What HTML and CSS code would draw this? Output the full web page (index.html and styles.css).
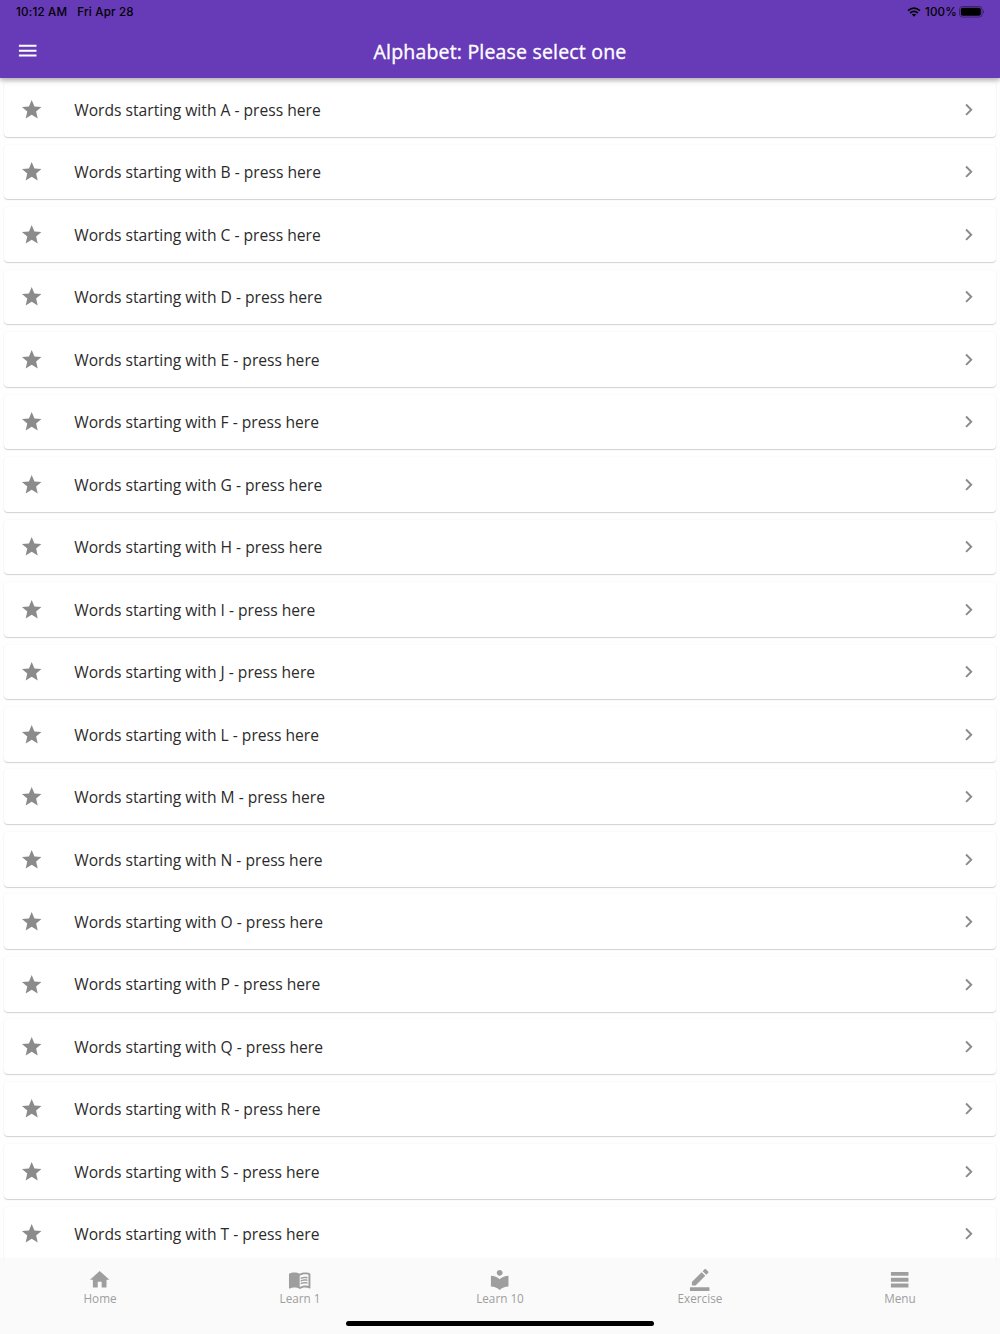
FILE: index.html
```html
<!DOCTYPE html>
<html lang="en">
<head>
    <meta charset="UTF-8">
    <meta name="viewport" content="width=device-width, initial-scale=1.0">
    <title>Alphabet</title>
    <link rel="stylesheet" href="styles.css">
</head>
<body>
    <div class="app">
        <header class="header">
            <div class="status-bar">
                <span class="time">10:12 AM</span>
                <span class="date">Fri Apr 28</span>
                <div class="status-right">
                    <svg class="wifi" viewBox="0 0 14 10">
                        <path d="M1 3.7Q7-1.5 13 3.7M3.1 6Q7 2.7 10.9 6" fill="none" stroke="#000" stroke-width="1.7"/>
                        <path d="M4.8 7.6Q7 5.9 9.2 7.6L7 9.8z"/>
                    </svg>
                    <span class="percent">100%</span>
                    <svg class="battery" viewBox="0 0 26 12">
                        <rect x=".5" y=".5" width="22.6" height="10.6" rx="3" fill="none" stroke="#000" stroke-opacity=".4"/>
                        <rect x="1.8" y="1.8" width="20" height="8" rx="1.8"/>
                        <path d="M24.2 4v3.6q1-.5 1-1.8t-1-1.8z" opacity=".45"/>
                    </svg>
                </div>
            </div>
            <div class="toolbar">
                <button class="menu-button" aria-label="Open menu">
                    <svg class="icon" viewBox="0 0 24 24"><path d="M3 18h18v-2H3v2zm0-5h18v-2H3v2zm0-7v2h18V6H3z"/></svg>
                </button>
                <h1 class="title">Alphabet: Please select one</h1>
            </div>
        </header>

        <main class="list" id="wordList"></main>

        <nav class="bottom-nav">
            <div class="tabs">
                <a class="tab">
                    <svg class="icon" viewBox="0 0 24 24"><path d="M10 20v-6h4v6h5v-8h3L12 3 2 12h3v8z"/></svg>
                    <span>Home</span>
                </a>
                <a class="tab">
                    <svg class="icon" viewBox="0 0 24 24">
                        <path fill-rule="evenodd" d="M21 5c-1.11-.35-2.33-.5-3.5-.5-1.95 0-4.05.4-5.5 1.5-1.45-1.1-3.55-1.5-5.5-1.5S2.45 4.9 1 6v14.65c0 .25.25.5.5.5.1 0 .15-.05.25-.05C3.1 20.45 5.05 20 6.5 20c1.95 0 4.05.4 5.5 1.5 1.35-.85 3.8-1.5 5.5-1.5 1.65 0 3.35.3 4.75 1.05.1.05.15.05.25.05.25 0 .5-.25.5-.5V6c-.6-.45-1.25-.75-2-1zm0 13.5c-1.1-.35-2.3-.5-3.5-.5-1.7 0-4.15.65-5.5 1.5V8c1.35-.85 3.8-1.5 5.5-1.5 1.2 0 2.4.15 3.5.5v11.5z"/>
                        <path d="M17.5 10.5c.88 0 1.73.09 2.5.26V9.24c-.79-.15-1.64-.24-2.5-.24-1.7 0-3.24.29-4.5.83v1.66c1.13-.64 2.7-.99 4.5-.99zM13 12.49v1.66c1.13-.64 2.7-.99 4.5-.99.88 0 1.73.09 2.5.26V11.9c-.79-.15-1.64-.24-2.5-.24-1.7 0-3.24.3-4.5.83zM17.5 14.33c-1.7 0-3.24.29-4.5.83v1.66c1.13-.64 2.7-.99 4.5-.99.88 0 1.73.09 2.5.26v-1.52c-.79-.16-1.64-.24-2.5-.24z"/>
                    </svg>
                    <span>Learn 1</span>
                </a>
                <a class="tab">
                    <svg class="icon" viewBox="0 0 24 24"><path d="M12 11.55C9.64 9.35 6.48 8 3 8v11c3.48 0 6.64 1.35 9 3.55 2.36-2.19 5.52-3.55 9-3.55V8c-3.48 0-6.64 1.35-9 3.55zM12 8c1.66 0 3-1.34 3-3s-1.34-3-3-3-3 1.34-3 3 1.34 3 3 3z"/></svg>
                    <span>Learn 10</span>
                </a>
                <a class="tab">
                    <svg class="icon edit" viewBox="0 0 24 24"><path d="M17.75 7L14 3.25l-10 10V17h3.75l10-10zm2.96-2.96c.39-.39.39-1.02 0-1.41L18.37.29c-.39-.39-1.02-.39-1.41 0L15 2.25 18.75 6l1.96-1.96zM2 18.7h20v4H2z"/></svg>
                    <span>Exercise</span>
                </a>
                <a class="tab">
                    <svg class="icon" viewBox="0 0 24 24"><path d="M3 4h18v4H3zM3 10h18v4H3zM3 16h18v4H3z"/></svg>
                    <span>Menu</span>
                </a>
            </div>
            <div class="home-indicator"></div>
        </nav>
    </div>
    <script src="script.js"></script>
</body>
</html>
```
FILE: styles.css
```css
/* General styling */
* {
    box-sizing: border-box;
}
body {
    margin: 0;
    font-family: "Open Sans", sans-serif;
    background-color: #fefefe;
}
.app {
    height: 1334px;
    display: flex;
    flex-direction: column;
    overflow: hidden;
}
.icon {
    display: block;
    width: 23.4px;
    height: 23.4px;
    fill: currentColor;
    flex: none;
}

/* Header */
.header {
    flex: none;
    height: 78.3px;
    background-color: #673ab7;
    box-shadow: 0 2px 4px rgba(0, 0, 0, 0.22), 0 3px 6px rgba(0, 0, 0, 0.12);
    z-index: 1;
}
.status-bar {
    display: flex;
    align-items: center;
    height: 23.4px;
    padding: 0 15px 0 16px;
    font-family: Inter, sans-serif;
    font-size: 11.6px;
    font-weight: 500;
    letter-spacing: 0.2px;
    color: #000;
}
.date {
    margin-left: 10px;
}
.status-right {
    display: flex;
    align-items: center;
    margin-left: auto;
}
.wifi {
    width: 14px;
    height: 10px;
    margin-right: 4px;
}
.battery {
    width: 26px;
    height: 12px;
    margin-left: 2px;
}
.toolbar {
    display: grid;
    grid-template-columns: 55px 1fr 55px;
    align-items: center;
    height: 55.6px;
}
.menu-button {
    display: flex;
    padding: 0 0 0 15.6px;
    border: none;
    background: none;
    color: white;
}
.title {
    margin: 0;
    text-align: center;
    font-size: 19.53px;
    font-weight: 500;
    letter-spacing: 0.18px;
    line-height: 27px;
    -webkit-text-stroke: 0.35px white;
    color: white;
}

/* Word list */
.list {
    flex: 1;
    min-height: 0;
    display: flex;
    flex-direction: column;
    gap: 7.8px;
    padding: 4px 3.9px 0;
    overflow: hidden;
}
.card {
    flex: none;
    display: flex;
    align-items: center;
    height: 54.68px;
    padding: 0 15.6px 0 16.2px;
    border-radius: 4px;
    background-color: white;
    box-shadow: 0 1px 1px rgba(0, 0, 0, 0.17), 0 0 2px rgba(0, 0, 0, 0.06);
    color: #8b8b8b;
}
.card-text {
    flex: 1;
    margin-left: 30.8px;
    padding-top: 0.6px;
    font-size: 15.63px;
    color: #2b2b2b;
}

/* Bottom navigation */
.bottom-nav {
    flex: none;
    height: 75px;
    background-color: #fafafa;
    box-shadow: 0 -1px 2px rgba(0, 0, 0, 0.02);
    z-index: 1;
}
.tabs {
    display: flex;
    height: 55px;
    padding-top: 9.4px;
}
.tab {
    flex: 1;
    display: flex;
    flex-direction: column;
    align-items: center;
    font-size: 11.72px;
    line-height: 16px;
    color: #9e9e9e;
}
.tab .edit {
    margin-top: 1px;
    margin-bottom: -1px;
}
.tab span {
    margin-top: -1.4px;
}
.home-indicator {
    width: 308px;
    height: 5px;
    margin: 7px auto 0;
    border-radius: 3px;
    background-color: black;
}
```
FILE: script.js
```js
const letters = "ABCDEFGHIJLMNOPQRST";
const wordList = document.getElementById("wordList");

// The list has no words starting with K
for (const letter of letters) {
    const card = document.createElement("div");
    card.className = "card";
    card.innerHTML = `
        <svg class="icon" viewBox="0 0 24 24"><path d="M12 17.27L18.18 21l-1.64-7.03L22 9.24l-7.19-.61L12 2 9.19 8.63 2 9.24l5.46 4.73L5.82 21z"/></svg>
        <span class="card-text">Words starting with ${letter} - press here</span>
        <svg class="icon" viewBox="0 0 24 24"><path d="M10 6L8.59 7.41 13.17 12l-4.58 4.59L10 18l6-6z"/></svg>`;
    wordList.appendChild(card);
}
```
